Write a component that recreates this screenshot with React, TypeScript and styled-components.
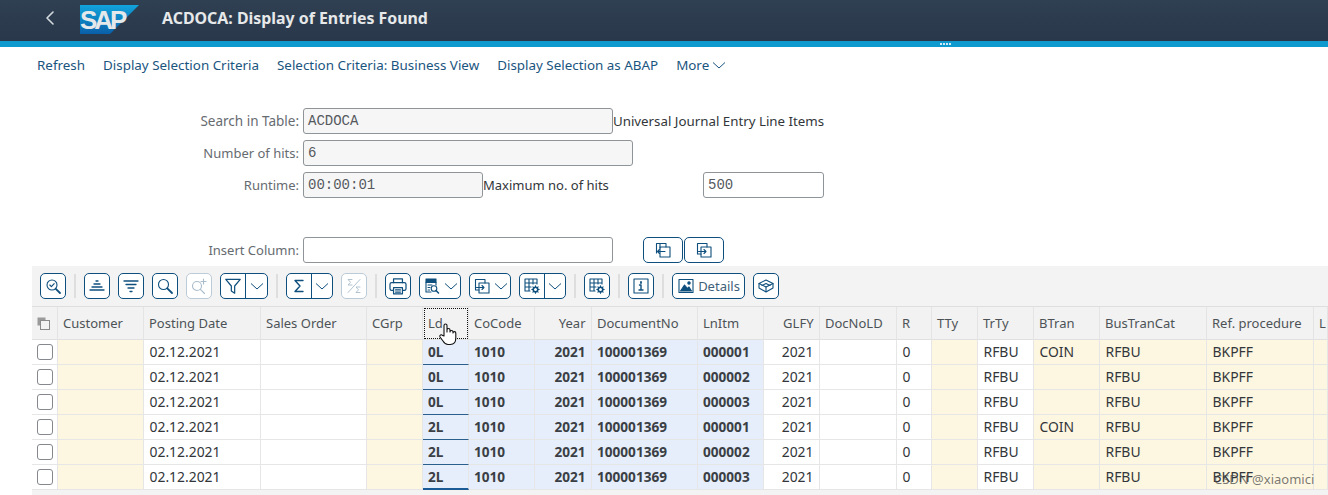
import React from "react";
import styled, { createGlobalStyle } from "styled-components";
import { ChevronLeft } from "lucide-react";

const FONT = `"Noto Sans", "Liberation Sans", Arial, sans-serif`;
const MONO = `"Liberation Mono", "DejaVu Sans Mono", monospace`;
const INK = "#32363a";
const LINK = "#1a5580";
const EDGE = "#0f4f7d";

const Global = createGlobalStyle`
  html, body { margin: 0; padding: 0; background: #fff; overflow: hidden; }
  body { width: 1328px; height: 495px; font-family: ${FONT}; color: ${INK}; position: relative; }
  * { box-sizing: border-box; }
`;

const Shell = styled.header`
  height: 41px;
  background: linear-gradient(#2f4052, #29384a);
  display: flex;
  align-items: center;
  padding: 0 0 5px 38px;
  color: #e6e8ea;
`;
const Back = styled.div`
  width: 24px;
  display: flex;
  color: #d5dade;
`;
const LogoBox = styled.svg`
  width: 60px;
  height: 30px;
  margin: 4px 22px 0 18px;
  flex: none;
`;
const Title = styled.h1`
  margin: 0;
  font: 700 15.9px ${FONT};
  white-space: nowrap;
`;
const Band = styled.div`
  height: 6px;
  background: #0f9acf;
  display: flex;
  justify-content: center;
  align-items: center;
  gap: 1px;
  padding-left: 562px;
`;
const Dot = styled.i`
  width: 2px;
  height: 2px;
  background: #cfe9f5;
`;
const Menu = styled.nav`
  height: 36px;
  display: flex;
  align-items: center;
  gap: 18px;
  padding: 0 0 0 37px;
`;
const MenuItem = styled.span`
  font-size: 13.4px;
  color: ${LINK};
  display: inline-flex;
  align-items: center;
  gap: 3px;
  white-space: nowrap;
`;
const Form = styled.section`
  padding-top: 25px;
  display: flex;
  flex-direction: column;
  gap: 6px;
`;
const Row = styled.div<{ $top?: number }>`
  display: flex;
  align-items: center;
  height: 26px;
  margin-top: ${(p) => p.$top ?? 0}px;
`;
const Label = styled.label<{ $size?: number }>`
  width: 303px;
  padding-right: 4px;
  flex: none;
  text-align: right;
  font-size: ${(p) => p.$size ?? 13}px;
  color: #666b70;
`;
const Field = styled.div<{ $w: number; $ro?: boolean; $at?: number }>`
  width: ${(p) => p.$w}px;
  margin-left: ${(p) => p.$at ?? 0}px;
  height: 26px;
  flex: none;
  border: 1px solid #8f9498;
  border-radius: 3px;
  background: ${(p) => (p.$ro ? "#f6f6f6" : "#fff")};
  font: 14px/25px ${MONO};
  padding-left: 4px;
  color: #55595e;
`;
const FormText = styled.span<{ $size?: number; $w?: number }>`
  font-size: ${(p) => p.$size ?? 13}px;
  width: ${(p) => (p.$w ? `${p.$w}px` : "auto")};
  flex: none;
  color: ${INK};
  white-space: nowrap;
`;
const PairButton = styled.button<{ $first?: boolean }>`
  width: 40px;
  height: 26px;
  margin-left: ${(p) => (p.$first ? "30px" : "1px")};
  padding: 0;
  border: 1px solid ${EDGE};
  border-radius: 5px;
  background: #fff;
  color: ${EDGE};
  display: flex;
  align-items: center;
  justify-content: center;
`;
const Toolbar = styled.div`
  margin: 3px 0 0 32px;
  height: 40px;
  background: #f3f3f3;
  display: flex;
  align-items: center;
  gap: 8px;
  padding-left: 8px;
`;
const Tool = styled.button<{ $off?: boolean; $w?: number }>`
  width: ${(p) => p.$w ?? 26}px;
  height: 26px;
  padding: 0;
  flex: none;
  background: #fff;
  border: 1px solid ${(p) => (p.$off ? "#bccbd8" : EDGE)};
  border-radius: 5px;
  color: ${(p) => (p.$off ? "#a9bccb" : EDGE)};
  display: flex;
  align-items: center;
  justify-content: center;
  gap: 3px;
  font: 13px ${FONT};
`;
const Split = styled.div<{ $w: number }>`
  width: ${(p) => p.$w}px;
  height: 26px;
  flex: none;
  display: flex;
  background: #fff;
  border: 1px solid ${EDGE};
  border-radius: 5px;
  color: ${EDGE};
`;
const SplitPart = styled.span<{ $main?: boolean }>`
  flex: ${(p) => (p.$main ? "0 0 25px" : "1")};
  display: flex;
  align-items: center;
  justify-content: center;
  border-right: ${(p) => (p.$main ? `1px solid ${EDGE}` : "0")};
`;
const Sep = styled.i`
  width: 2px;
  height: 24px;
  background: #dedede;
  flex: none;
`;
const DetailsText = styled.span`
  color: #3f5f7a;
  font-size: 13px;
`;

const COLS = "26px 86px 117px 106px 56px 46px 66px 57px 106px 66px 56px 77px 35px 46px 56px 66px 107px 107px 14px";
const Table = styled.div`
  margin-left: 32px;
  background: #f3f3f3;
  height: 189px;
  border-top: 1px solid #dedede;
`;
const Grid = styled.div<{ $h: number }>`
  display: grid;
  grid-template-columns: ${COLS};
  height: ${(p) => p.$h}px;
`;
const Head = styled.div<{ $right?: boolean; $focus?: boolean }>`
  background: #f2f2f2;
  border-right: 1px solid #e4e4e4;
  border-bottom: 1px solid #e0e0e0;
  font-size: 13px;
  color: #4d5257;
  display: flex;
  align-items: center;
  justify-content: ${(p) => (p.$right ? "flex-end" : "flex-start")};
  padding: 0 5.5px 0 5px;
  white-space: nowrap;
  overflow: hidden;
  position: relative;
  outline: ${(p) => (p.$focus ? "1px dotted #111" : "0")};
  outline-offset: -2px;
`;
const TONES: Record<string, string> = { w: "#fff", y: "#fdf7e1", k: "#e5eefa" };
const Cell = styled.div<{ $tone: string; $right?: boolean; $bold?: boolean; $mark?: number }>`
  background: ${(p) => TONES[p.$tone]};
  border-right: 1px solid #e6e6e6;
  border-bottom: ${(p) => (p.$mark ? `${p.$mark}px solid ${p.$mark > 1 ? "#1a5a95" : "#2a5f8c"}` : "1px solid #e6e6e6")};
  font-size: ${(p) => (p.$bold ? "13.6px" : "13.9px")};
  font-weight: ${(p) => (p.$bold ? 700 : 400)};
  color: ${(p) => (p.$bold ? "#3b3f45" : INK)};
  display: flex;
  align-items: center;
  justify-content: ${(p) => (p.$right ? "flex-end" : "flex-start")};
  padding: 0 5.5px 1px ${(p) => (p.$bold ? "5px" : "5.5px")};
  white-space: nowrap;
`;
const CheckCell = styled.div`
  background: #fff;
  border-right: 1px solid #e6e6e6;
  border-bottom: 1px solid #e6e6e6;
  display: flex;
  align-items: center;
  padding-left: 5px;
`;
const Check = styled.span`
  width: 16px;
  height: 16px;
  border: 1px solid #85898d;
  border-radius: 3px;
  background: #fff;
`;
const HandMark = styled.svg`
  position: absolute;
  left: 438px;
  top: 322px;
  width: 20px;
  height: 24px;
`;
const Watermark = styled.span`
  position: absolute;
  left: 1214px;
  top: 470px;
  font-size: 13px;
  color: rgba(70, 70, 70, 0.72);
  white-space: nowrap;
`;

const Ico = ({ children, size = 18 }: { children: React.ReactNode; size?: number }) => (
  <svg width={size} height={size} viewBox="0 0 18 18" fill="none" stroke="currentColor" strokeWidth="1.1" strokeLinecap="round" strokeLinejoin="round">
    {children}
  </svg>
);
const Chev = () => (
  <svg width="14" height="14" viewBox="0 0 14 14" fill="none" stroke="currentColor" strokeWidth="1">
    <path d="M1 4.500 7 10l6-5.500" />
  </svg>
);

const Logo = () => (
  <LogoBox viewBox="0 0 60 30">
    <defs>
      <linearGradient id="sapG" x1="0" y1="0" x2="0" y2="1">
        <stop offset="0" stopColor="#12a4dc" />
        <stop offset="1" stopColor="#0a5fa8" />
      </linearGradient>
    </defs>
    <polygon points="0,0 59,0 30,29 0,29" fill="url(#sapG)" />
    <text x="0" y="24" fontFamily="Liberation Sans, sans-serif" fontWeight="700" fontSize="26" fill="#e4e8ea" letterSpacing="-3">SAP</text>
  </LogoBox>
);

const ZoomCheck = () => (
  <Ico><circle cx="8" cy="8" r="5" /><path d="M11.800 11.800 16 16" strokeWidth="1.800" /><path d="m5.800 8 1.600 1.600 2.800-3" /></Ico>
);
const SortUp = () => (
  <Ico><path d="M8 4h2M6 7h6M4 10h10M2 13h14" strokeWidth="1.300" /></Ico>
);
const SortDown = () => (
  <Ico><path d="M2 4h14M4 7.500h10M6 11h6M8 14.500h2" strokeWidth="1.300" /></Ico>
);
const Find = () => (
  <Ico><circle cx="7.500" cy="7.500" r="5" /><path d="M11.300 11.300 16 16" strokeWidth="1.800" /></Ico>
);
const FindNext = () => (
  <Ico><circle cx="7" cy="9" r="4.500" /><path d="M10.400 12.400 14.500 16.500" /><path d="M13.500 2v5M11 4.500h5" /></Ico>
);
const Funnel = () => (
  <Ico size={20}><path d="M2.500 3h13L10.500 9v6.500L7.500 13.500V9z" /></Ico>
);
const Sigma = () => <Ico><path d="M13 3.500H5l5 5.500-5 5.500h8" strokeWidth="1.400" /></Ico>;
const SubSigma = () => (
  <Ico><path d="M7 2.500H3l2.500 2.800L3 8h4M15 10h-4l2.500 2.800L11 15.500h4M15 2.500 3 15.500" strokeWidth="0.900" /></Ico>
);
const Printer = () => (
  <Ico size={20}>
    <path d="M5 6V2.500h8V6" /><rect x="1.800" y="6" width="14.400" height="7" rx="1.500" /><rect x="5" y="10.500" width="8" height="5.500" fill="#fff" /><path d="M6.800 12.500h4.400M6.800 14.500h4.400" />
  </Ico>
);
const LayoutFind = () => (
  <Ico>
    <path d="M3 5.500V2h10v3.500z" fill="currentColor" />
    <path d="M13 5.500V8M3 5.500V15h5" /><path d="M5 8h4M5 10.500h2M5 13h1.500" /><circle cx="11" cy="11.500" r="2.800" /><path d="m13 13.500 2.500 2.500" strokeWidth="1.500" />
  </Ico>
);
const Export = () => (
  <Ico>
    <path d="M6 13H2.500V2.500H12V6" /><rect x="6" y="6" width="10" height="10" /><path d="M3.500 10.500H11M9 8.500l2 2-2 2" />
  </Ico>
);
const Import = () => (
  <Ico>
    <path d="M6 7V2.500h-3.500V12M6 2.500h6V6" /><rect x="6" y="6" width="10" height="10" /><path d="M11 10.500H3.500M5.500 8.500l-2 2 2 2" />
  </Ico>
);
const GridGear = () => (
  <Ico>
    <path d="M2 2h12v5M2 2v12h5M2 6h12M2 10h6M6 2v12M10 2v5" />
    <circle cx="12.500" cy="12.500" r="2.300" strokeWidth="1.600" />
    <path d="M12.500 8.800v1.400M12.500 14.800v1.400M8.800 12.500h1.400M14.800 12.500h1.400M9.900 9.900l1 1M14.100 14.100l1 1M15.100 9.900l-1 1M10.900 14.100l-1 1" />
  </Ico>
);
const Info = () => (
  <Ico><rect x="2" y="2" width="14" height="14" /><path d="M7.500 8h1.500v5M7 13h4" strokeWidth="1.400" /><path d="M9 5v1" strokeWidth="1.800" /></Ico>
);
const Picture = () => (
  <Ico>
    <rect x="2" y="2.500" width="14" height="13" />
    <path d="m3.500 14 4-6 3 3.500 1.500-1.500 2.500 4z" fill="currentColor" />
    <circle cx="12" cy="6" r="1.200" fill="currentColor" />
  </Ico>
);
const Stack = () => (
  <Ico><path d="M9 3 16 6.500 9 10 2 6.500z" /><path d="M2 6.500v4.500L9 15l7-4V6.500M9 10v5" /><path d="M5 8.500 9 6.500 13 8.500" /></Ico>
);
const SelectAll = () => (
  <svg width="13" height="13" viewBox="0 0 13 13">
    <rect x="0.500" y="0.500" width="8" height="8" fill="#9a9a9a" />
    <rect x="3.500" y="3.500" width="9" height="9" fill="#f2f2f2" stroke="#8a8a8a" />
  </svg>
);

type Col = { name: string; tone: string; right?: boolean; bold?: boolean };
const COLUMNS: Col[] = [
  { name: "Customer", tone: "y" },
  { name: "Posting Date", tone: "w" },
  { name: "Sales Order", tone: "w" },
  { name: "CGrp", tone: "y" },
  { name: "Ld", tone: "k", bold: true },
  { name: "CoCode", tone: "k", bold: true },
  { name: "Year", tone: "k", right: true, bold: true },
  { name: "DocumentNo", tone: "k", bold: true },
  { name: "LnItm", tone: "k", bold: true },
  { name: "GLFY", tone: "w", right: true },
  { name: "DocNoLD", tone: "w" },
  { name: "R", tone: "w" },
  { name: "TTy", tone: "y" },
  { name: "TrTy", tone: "w" },
  { name: "BTran", tone: "y" },
  { name: "BusTranCat", tone: "y" },
  { name: "Ref. procedure", tone: "y" },
  { name: "L", tone: "y" },
];
const row = (ld: string, item: string, btran: string) => [
  "", "02.12.2021", "", "", ld, "1010", "2021", "100001369", item, "2021", "", "0", "", "RFBU", btran, "RFBU", "BKPFF", "",
];
const ROWS = [
  row("0L", "000001", "COIN"),
  row("0L", "000002", ""),
  row("0L", "000003", ""),
  row("2L", "000001", "COIN"),
  row("2L", "000002", ""),
  row("2L", "000003", ""),
];

export default function App() {
  return (
    <>
      <Global />
      <Shell>
        <Back><ChevronLeft size={24} strokeWidth={1.6} /></Back>
        <Logo />
        <Title>ACDOCA: Display of Entries Found</Title>
      </Shell>
      <Band><Dot /><Dot /><Dot /><Dot /></Band>
      <Menu>
        <MenuItem>Refresh</MenuItem>
        <MenuItem>Display Selection Criteria</MenuItem>
        <MenuItem>Selection Criteria: Business View</MenuItem>
        <MenuItem>Display Selection as ABAP</MenuItem>
        <MenuItem>More <Chev /></MenuItem>
      </Menu>
      <Form>
        <Row>
          <Label $size={13.5}>Search in Table:</Label>
          <Field $w={310} $ro>ACDOCA</Field>
          <FormText $size={13.3}>Universal Journal Entry Line Items</FormText>
        </Row>
        <Row>
          <Label>Number of hits:</Label>
          <Field $w={330} $ro>6</Field>
        </Row>
        <Row>
          <Label>Runtime:</Label>
          <Field $w={180} $ro>00:00:01</Field>
          <FormText $w={125}>Maximum no. of hits</FormText>
          <Field $w={121} $at={95}>500</Field>
        </Row>
        <Row $top={33}>
          <Label>Insert Column:</Label>
          <Field $w={310} />
          <PairButton $first><Import /></PairButton>
          <PairButton><Export /></PairButton>
        </Row>
      </Form>
      <Toolbar>
        <Tool><ZoomCheck /></Tool>
        <Sep />
        <Tool><SortUp /></Tool>
        <Tool><SortDown /></Tool>
        <Tool><Find /></Tool>
        <Tool $off><FindNext /></Tool>
        <Split $w={48}><SplitPart $main><Funnel /></SplitPart><SplitPart><Chev /></SplitPart></Split>
        <Sep />
        <Split $w={47}><SplitPart $main><Sigma /></SplitPart><SplitPart><Chev /></SplitPart></Split>
        <Tool $off><SubSigma /></Tool>
        <Sep />
        <Tool><Printer /></Tool>
        <Tool $w={42}><LayoutFind /><Chev /></Tool>
        <Tool $w={42}><Export /><Chev /></Tool>
        <Split $w={47}><SplitPart $main><GridGear /></SplitPart><SplitPart><Chev /></SplitPart></Split>
        <Sep />
        <Tool><GridGear /></Tool>
        <Sep />
        <Tool><Info /></Tool>
        <Sep />
        <Tool $w={73}><Picture /><DetailsText>Details</DetailsText></Tool>
        <Tool><Stack /></Tool>
      </Toolbar>
      <Table>
        <Grid $h={33}>
          <Head><SelectAll /></Head>
          {COLUMNS.map((c) => (
            <Head key={c.name} $right={c.right} $focus={c.name === "Ld"}>{c.name}</Head>
          ))}
        </Grid>
        {ROWS.map((r, i) => (
          <Grid $h={25} key={i}>
            <CheckCell><Check /></CheckCell>
            {r.map((v, j) => {
              const c = COLUMNS[j];
              const mark = c.name === "Ld" ? (i === ROWS.length - 1 ? 2 : 1) : 0;
              return (
                <Cell key={j} $tone={c.tone} $right={c.right} $bold={c.bold} $mark={mark}>{v}</Cell>
              );
            })}
          </Grid>
        ))}
      </Table>
      <HandMark viewBox="0 0 20 24">
        <path d="M6 14V3.500a1.500 1.500 0 0 1 3 0V10l0-2a1.500 1.500 0 0 1 3 0v2a1.500 1.500 0 0 1 3 0v1a1.400 1.400 0 0 1 2.800 0v5c0 4-2 6.500-5.500 6.500H10c-2.500 0-3.500-1-5-3.500L2 15c-1-2 1.500-3 2.500-1.500z" fill="#fff" stroke="#111" strokeWidth="1.1" strokeLinejoin="round" />
      </HandMark>
      <Watermark>CSDN @xiaomici</Watermark>
    </>
  );
}
